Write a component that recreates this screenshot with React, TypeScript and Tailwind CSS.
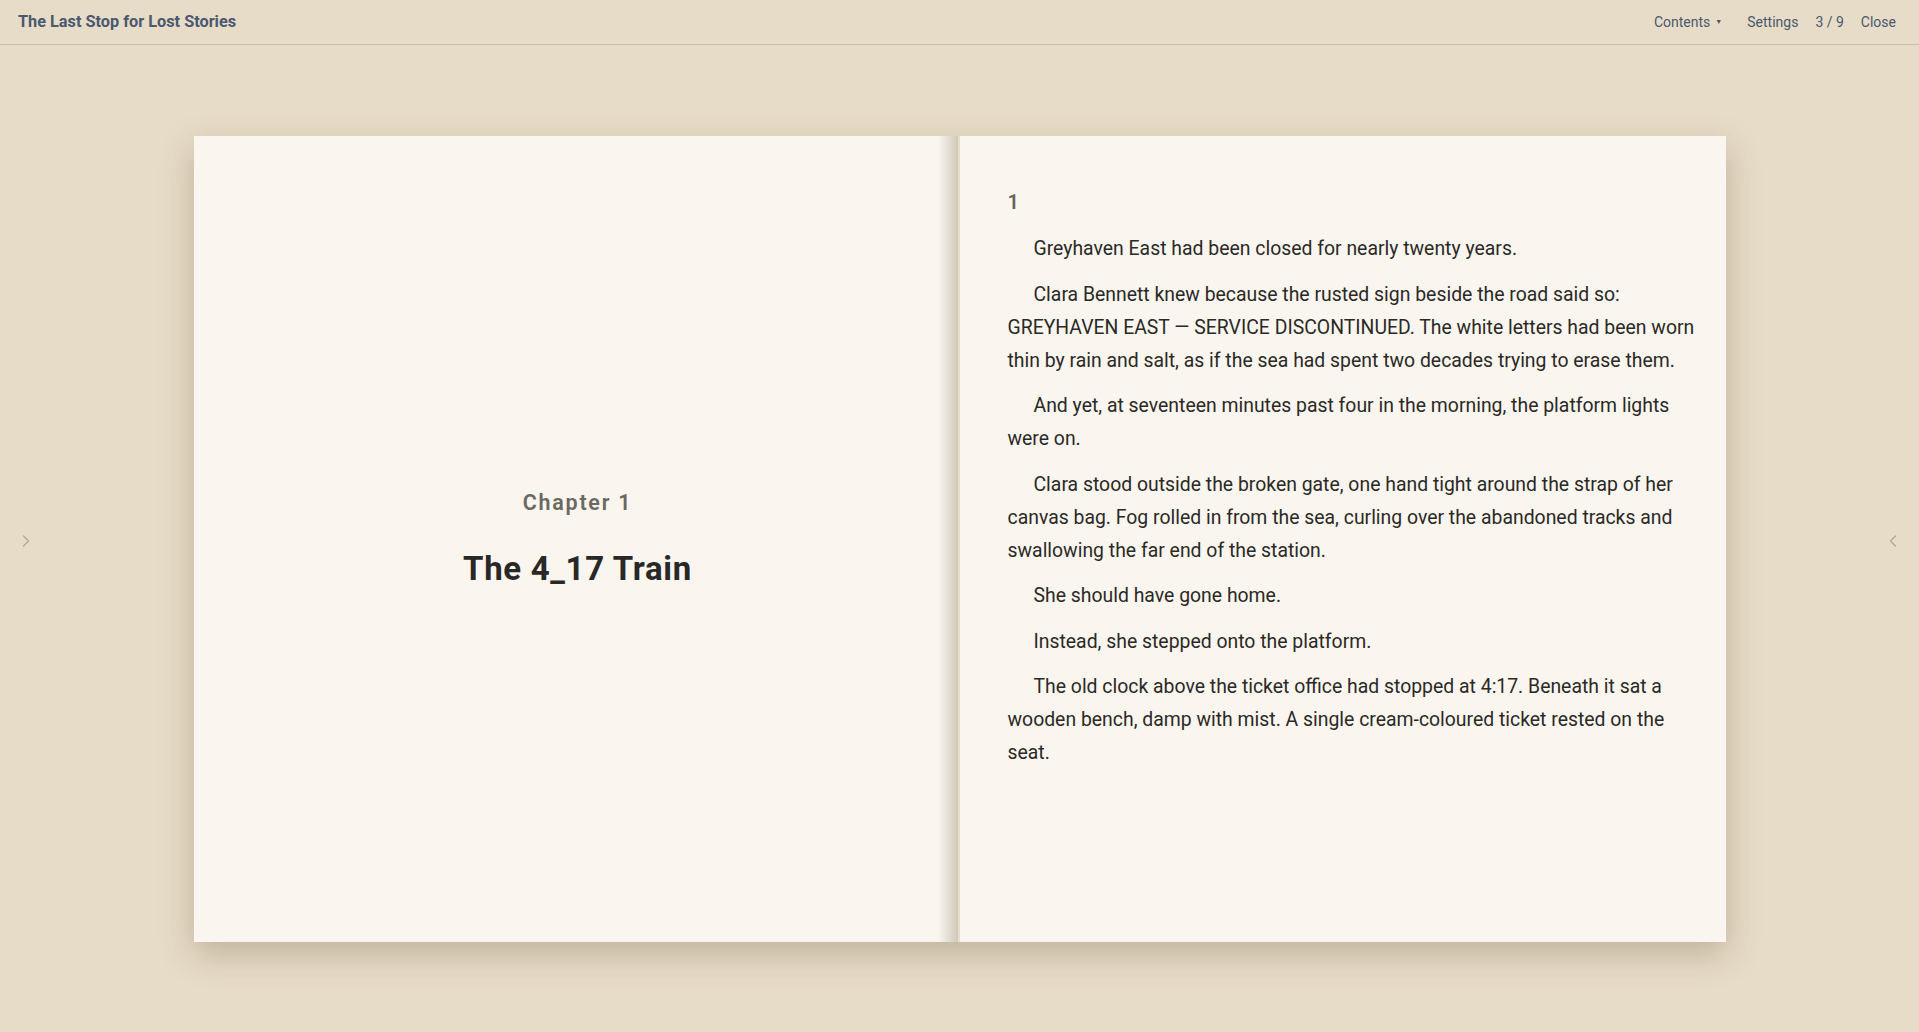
import { ChevronLeft, ChevronRight } from "lucide-react";

const paragraphs = [
  "Greyhaven East had been closed for nearly twenty years.",
  "Clara Bennett knew because the rusted sign beside the road said so: GREYHAVEN EAST — SERVICE DISCONTINUED. The white letters had been worn thin by rain and salt, as if the sea had spent two decades trying to erase them.",
  "And yet, at seventeen minutes past four in the morning, the platform lights were on.",
  "Clara stood outside the broken gate, one hand tight around the strap of her canvas bag. Fog rolled in from the sea, curling over the abandoned tracks and swallowing the far end of the station.",
  "She should have gone home.",
  "Instead, she stepped onto the platform.",
  "The old clock above the ticket office had stopped at 4:17. Beneath it sat a wooden bench, damp with mist. A single cream-coloured ticket rested on the seat.",
];

export default function App() {
  return (
    <div className="w-full h-[1032px] bg-[#e7dcc7] flex flex-col font-['Roboto',sans-serif] overflow-hidden">
      {/* Top bar */}
      <header className="h-[45px] shrink-0 flex items-center justify-between pl-[18px] pr-[23px] border-b border-[#c9bda6]">
        <h1 className="text-[16.3px] font-bold text-[#4a5870]">The Last Stop for Lost Stories</h1>
        <nav className="flex items-center gap-[17px] text-[14px] text-[#4a5870]">
          <button className="flex items-center gap-[5px] mr-[8px]">
            Contents <span className="text-[7px] leading-none">▼</span>
          </button>
          <button>Settings</button>
          <span>3 / 9</span>
          <button>Close</button>
        </nav>
      </header>

      {/* Reader */}
      <main className="flex-1 flex items-start">
        <div className="w-[52px] self-stretch flex items-center justify-center text-[#b3a78f]">
          <ChevronRight className="w-[20px] h-[20px] mt-[5px]" strokeWidth={1.5} />
        </div>

        <div className="flex-1 flex justify-center pt-[91px]">
          <div className="flex gap-[2px] w-[1532px] h-[806px] shadow-[0_12px_32px_rgba(90,70,40,0.28)]">
            {/* Left page */}
            <section className="relative w-[764px] bg-[#faf6ef] flex flex-col items-center justify-center pt-[2px] pl-[4px]">
              <div className="text-[21.5px] font-semibold tracking-[0.08em] text-[#6b6861]">Chapter 1</div>
              <div className="mt-[25px] text-[33px] font-bold tracking-[0.02em] text-[#2a2826]">The 4_17 Train</div>
              <div className="absolute top-0 right-0 h-full w-[20px] bg-gradient-to-r from-transparent to-[#cfc8ba]" />
            </section>

            {/* Right page */}
            <section className="w-[766px] bg-[#faf6ef] pl-[48px] pr-[26px] pt-[51px] text-[#2b2926]">
              <div className="text-[20px] font-semibold text-[#67645e] mb-[15px]">1</div>
              {paragraphs.map((p) => (
                <p key={p.slice(0, 20)} className="text-[19.4px] leading-[33px] indent-[26px] mb-[12.5px]">
                  {p}
                </p>
              ))}
            </section>
          </div>
        </div>

        <div className="w-[52px] self-stretch flex items-center justify-center text-[#b3a78f]">
          <ChevronLeft className="w-[20px] h-[20px] mt-[5px]" strokeWidth={1.5} />
        </div>
      </main>
    </div>
  );
}
